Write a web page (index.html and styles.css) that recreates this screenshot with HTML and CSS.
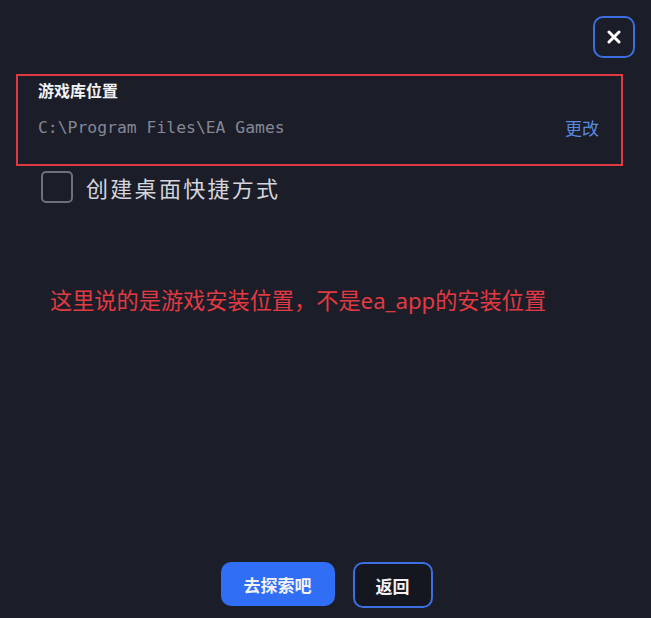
FILE: index.html
```html
<!DOCTYPE html>
<html lang="zh-CN">
<head>
    <meta charset="UTF-8">
    <meta name="viewport" content="width=device-width, initial-scale=1.0">
    <title>安装位置</title>
    <link rel="stylesheet" href="styles.css">
</head>
<body>
    <div class="dialog">
        <div class="dialog-header">
            <button class="close-btn" aria-label="关闭">
                <svg width="14" height="14" viewBox="0 0 14 14">
                    <path d="M2 2 L12 12 M12 2 L2 12" stroke="#fff" stroke-width="3" stroke-linecap="round"/>
                </svg>
            </button>
        </div>

        <div class="library-box">
            <div class="library-title">游戏库位置</div>
            <div class="library-row">
                <span class="library-path">C:\Program Files\EA Games</span>
                <a class="change-link" href="#">更改</a>
            </div>
        </div>

        <label class="shortcut">
            <span class="checkbox"></span>
            <span class="shortcut-text">创建桌面快捷方式</span>
        </label>

        <p class="note">这里说的是游戏安装位置，不是ea_app的安装位置</p>

        <div class="actions">
            <button class="btn btn-primary">去探索吧</button>
            <button class="btn btn-outline">返回</button>
        </div>
    </div>
</body>
</html>
```

FILE: styles.css
```css
body {
    margin: 0;
    height: 100vh;
    background-color: #1b1d29;
    font-family: 'Noto Sans', 'Noto Sans CJK SC', sans-serif;
    color: #d4d6dc;
}

.dialog {
    display: flex;
    flex-direction: column;
    height: 100%;
    box-sizing: border-box;
    padding: 16px 16px 10px 16px;
}

.dialog-header {
    display: flex;
    justify-content: flex-end;
}

.close-btn {
    width: 42px;
    height: 42px;
    border: 2px solid #3b6fe2;
    border-radius: 10px;
    background: transparent;
    display: flex;
    align-items: center;
    justify-content: center;
    padding: 0;
    cursor: pointer;
}

.library-box {
    margin: 16px 12px 0 0;
    height: 92px;
    box-sizing: border-box;
    border: 2px solid #e23a42;
    padding: 4px 22px 0 20px;
}

.library-title {
    font-size: 16px;
    font-weight: bold;
    color: #f2f2f4;
    line-height: 22px;
}

.library-row {
    display: flex;
    justify-content: space-between;
    align-items: center;
    margin-top: 13px;
}

.library-path {
    font-family: 'DejaVu Sans Mono', 'Liberation Mono', monospace;
    font-size: 16.4px;
    color: #858894;
}

.change-link {
    font-size: 17px;
    color: #5a8ae0;
    text-decoration: none;
}

.shortcut {
    display: flex;
    align-items: center;
    gap: 13px;
    margin: 5px 0 0 25px;
}

.checkbox {
    width: 28px;
    height: 28px;
    border: 2px solid #6e717c;
    border-radius: 5px;
}

.shortcut-text {
    font-size: 22px;
    letter-spacing: 2.3px;
    color: #d4d6dc;
}

.note {
    margin: 80px 0 0 34px;
    font-size: 22.2px;
    color: #e23a42;
}

.actions {
    margin-top: auto;
    display: flex;
    justify-content: center;
    gap: 18px;
    padding-left: 2px;
}

.btn {
    height: 44px;
    border-radius: 10px;
    font-family: 'Noto Sans CJK SC', sans-serif;
    font-size: 17px;
    font-weight: bold;
    color: #f2f2f4;
    cursor: pointer;
}

.btn-primary {
    width: 114px;
    border: none;
    background-color: #2f6ef5;
}

.btn-outline {
    width: 80px;
    height: 46px;
    border: 2px solid #3b6fe2;
    background-color: #141620;
}
```
